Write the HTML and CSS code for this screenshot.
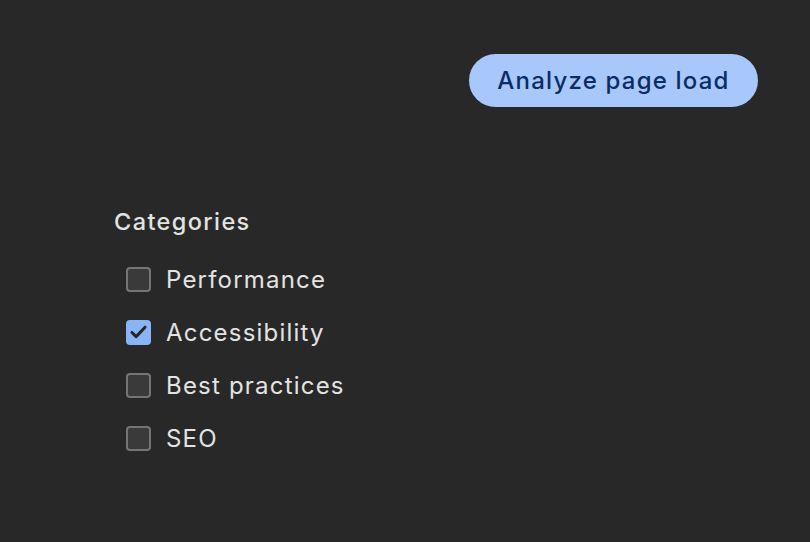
FILE: index.html
```html
<!DOCTYPE html>
<html>
<head>
<meta charset="utf-8">
<link rel="stylesheet" href="styles.css">
</head>
<body>
<div class="page">
  <div class="toolbar">
    <button class="analyze">Analyze page load</button>
  </div>
  <section class="categories">
    <h2 class="title">Categories</h2>
    <ul class="list">
      <li class="item"><span class="box"></span><span class="label">Performance</span></li>
      <li class="item"><span class="box checked"><svg viewBox="0 0 24 24" width="24" height="24"><path d="M4.5 12.5l4.8 4.8L19.5 6.5" fill="none" stroke="#262626" stroke-width="3.4" stroke-linecap="round" stroke-linejoin="round"/></svg></span><span class="label">Accessibility</span></li>
      <li class="item"><span class="box"></span><span class="label">Best practices</span></li>
      <li class="item"><span class="box"></span><span class="label">SEO</span></li>
    </ul>
  </section>
</div>
</body>
</html>
```
FILE: styles.css
```css
html, body {
  margin: 0;
  padding: 0;
  background: #282828;
  height: 100%;
}
.page {
  font-family: Inter, "Noto Sans", sans-serif;
  color: #e3e3e3;
  height: 542px;
  box-sizing: border-box;
}
.toolbar {
  display: flex;
  justify-content: flex-end;
  padding: 54px 52px 0 0;
}
.analyze {
  font-family: inherit;
  font-size: 24px;
  font-weight: 500;
  letter-spacing: 1.2px;
  color: #0a2d66;
  background: #a8c7fa;
  border: none;
  border-radius: 27px;
  height: 53px;
  width: 289px;
  padding: 0;
}
.categories {
  padding: 100px 0 0 114px;
}
.title {
  margin: 0;
  font-size: 23.5px;
  font-weight: 500;
  letter-spacing: 1.4px;
  line-height: 30px;
  color: #e3e3e3;
}
.list {
  list-style: none;
  margin: 26px 0 0 0;
  padding: 0 0 0 12px;
  display: flex;
  flex-direction: column;
  gap: 21px;
}
.item {
  display: flex;
  align-items: center;
  gap: 15px;
  height: 32px;
  font-size: 24px;
  letter-spacing: 1.2px;
}
.box {
  width: 21px;
  height: 21px;
  border: 2px solid #757575;
  border-radius: 4px;
  background: #3a3a3a;
  display: flex;
  align-items: center;
  justify-content: center;
}
.box.checked {
  background: #8ab4f8;
  border-color: #8ab4f8;
}
.label {
  color: #e3e3e3;
}
```
